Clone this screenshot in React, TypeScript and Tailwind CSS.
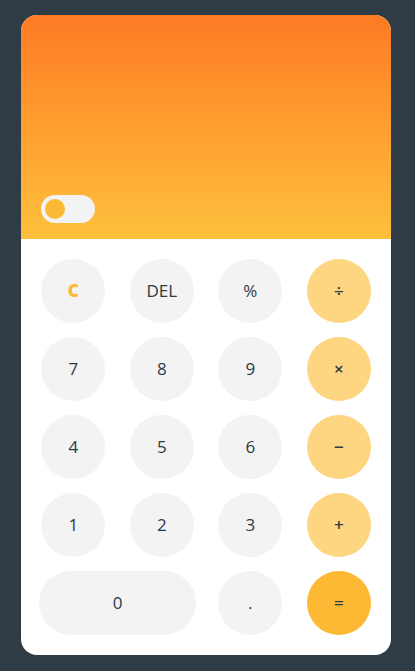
import React from 'react';

type Key = { label: string; kind: 'num' | 'op' | 'eq' | 'clear'; wide?: boolean };

const keys: Key[] = [
  { label: 'C', kind: 'clear' },
  { label: 'DEL', kind: 'num' },
  { label: '%', kind: 'num' },
  { label: '÷', kind: 'op' },
  { label: '7', kind: 'num' },
  { label: '8', kind: 'num' },
  { label: '9', kind: 'num' },
  { label: '×', kind: 'op' },
  { label: '4', kind: 'num' },
  { label: '5', kind: 'num' },
  { label: '6', kind: 'num' },
  { label: '−', kind: 'op' },
  { label: '1', kind: 'num' },
  { label: '2', kind: 'num' },
  { label: '3', kind: 'num' },
  { label: '+', kind: 'op' },
  { label: '0', kind: 'num', wide: true },
  { label: '.', kind: 'num' },
  { label: '=', kind: 'eq' },
];

function CalcKey({ k }: { k: Key }) {
  const base =
    'h-16 rounded-full flex items-center justify-center text-[17px] text-[#2d3a45]';
  const size = k.wide ? 'col-span-2 w-full' : 'w-16';
  const color =
    k.kind === 'op'
      ? 'bg-[#fed580] font-semibold'
      : k.kind === 'eq'
        ? 'bg-[#fdb934] font-semibold'
        : 'bg-[#f3f3f3]';
  const text = k.kind === 'clear' ? 'text-[#fbb934] font-extrabold' : '';
  return <button className={`${base} ${size} ${color} ${text}`}>{k.label}</button>;
}

export default function App() {
  return (
    <div
      className="min-h-screen w-full bg-[#2f3b45] pl-[21px] pt-[15px]"
      style={{ fontFamily: '"Open Sans", "Liberation Sans", sans-serif' }}
    >
      <div className="w-[370px] h-[640px] bg-white rounded-2xl overflow-hidden flex flex-col">
        {/* Display */}
        <div className="h-[224px] bg-gradient-to-b from-[#fd7a24] to-[#fdc03c] flex items-end px-5 pb-4">
          <div className="w-[54px] h-7 rounded-full bg-[#f3f3f3] flex items-center px-1">
            <div className="w-5 h-5 rounded-full bg-[#fbb934]" />
          </div>
        </div>

        {/* Keypad */}
        <div className="grid grid-cols-4 gap-x-5 gap-y-[14px] px-[18px] py-5 justify-items-center">
          {keys.map((k) => (
            <CalcKey key={k.label} k={k} />
          ))}
        </div>
      </div>
    </div>
  );
}
